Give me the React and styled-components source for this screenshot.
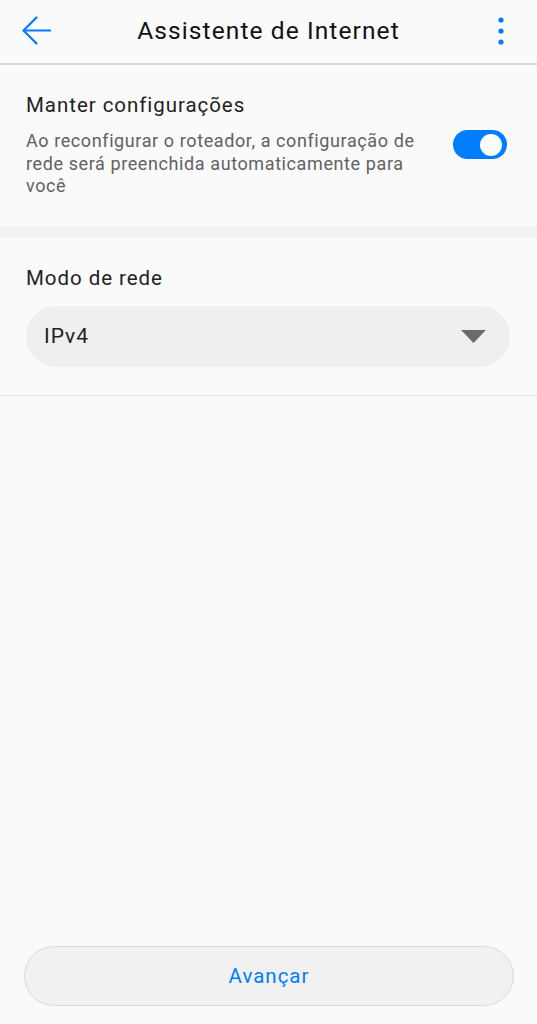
import React from "react";
import styled, { createGlobalStyle } from "styled-components";

const Global = createGlobalStyle`
  html, body { margin: 0; padding: 0; background: #fafafa; }
  body { font-family: Roboto, "Noto Sans", Arial, sans-serif; }
  * { box-sizing: border-box; }
`;

const Page = styled.div`
  min-height: 100vh;
  display: flex;
  flex-direction: column;
  background: #fafafa;
`;

const Header = styled.header`
  height: 65px;
  display: flex;
  align-items: center;
  justify-content: space-between;
  padding: 0 20px 2px 20px;
  border-bottom: 2px solid #d8d8d8;
`;

const IconButton = styled.button`
  width: 32px;
  height: 32px;
  padding: 0;
  border: none;
  background: none;
  display: flex;
  align-items: center;
  justify-content: center;
`;

const Title = styled.h1`
  margin: 0;
  font-size: 24.5px;
  font-weight: 400;
  color: #111;
  letter-spacing: 1.1px;
`;

const Section = styled.section`
  padding: ${(p) => p.$pad};
  background: #fafafa;
  border-bottom: ${(p) => (p.$line ? "1px solid #e3e3e3" : "none")};
`;

const Band = styled.div`
  height: 11px;
  background: #f3f3f3;
`;

const SectionTitle = styled.div`
  font-size: 20.5px;
  line-height: 24px;
  letter-spacing: 0.95px;
  color: #222;
`;

const Row = styled.div`
  display: flex;
  align-items: flex-start;
  justify-content: space-between;
  margin-top: 13px;
`;

const Desc = styled.p`
  margin: 0;
  width: 400px;
  font-size: 18px;
  line-height: 22.5px;
  letter-spacing: 0.6px;
  color: #616161;
`;

const Toggle = styled.div`
  width: 54px;
  height: 29px;
  border-radius: 15px;
  background: #007dff;
  display: flex;
  align-items: center;
  justify-content: flex-end;
  padding-right: 5px;
  flex-shrink: 0;
`;

const Knob = styled.div`
  width: 22px;
  height: 22px;
  border-radius: 50%;
  background: #fff;
`;

const Select = styled.div`
  margin-top: 16px;
  height: 61px;
  border-radius: 31px;
  background: #efefef;
  display: flex;
  align-items: center;
  justify-content: space-between;
  padding: 0 24px 0 18px;
  font-size: 21px;
  letter-spacing: 1px;
  color: #222;
`;

const Spacer = styled.div`
  flex: 1;
`;

const Footer = styled.div`
  padding: 0 23px 18px 24px;
`;

const PrimaryButton = styled.button`
  width: 100%;
  height: 60px;
  border-radius: 30px;
  border: 1px solid #dadada;
  background: #f1f1f1;
  color: #007dff;
  font-family: Roboto, "Noto Sans", Arial, sans-serif;
  font-size: 20.5px;
  letter-spacing: 1px;
`;

export default function App() {
  return (
    <Page>
      <Global />
      <Header>
        <IconButton aria-label="Voltar">
          <svg width="30" height="30" viewBox="0 0 30 30" fill="none">
            <path d="M29 14.5H3" stroke="#007dff" strokeWidth="2.2" strokeLinecap="round" />
            <path d="M15.5 1.5L2.5 14.5L15.5 27.5" stroke="#007dff" strokeWidth="2.2" strokeLinecap="round" strokeLinejoin="round" />
          </svg>
        </IconButton>
        <Title>Assistente de Internet</Title>
        <IconButton aria-label="Mais">
          <svg width="8" height="30" viewBox="0 0 8 30">
            <circle cx="4" cy="4" r="2.6" fill="#007dff" />
            <circle cx="4" cy="15" r="2.6" fill="#007dff" />
            <circle cx="4" cy="26" r="2.6" fill="#007dff" />
          </svg>
        </IconButton>
      </Header>

      <Section $pad="28px 30px 28px 26px">
        <SectionTitle>Manter configurações</SectionTitle>
        <Row>
          <Desc>
            Ao reconfigurar o roteador, a configuração de rede será preenchida
            automaticamente para você
          </Desc>
          <Toggle>
            <Knob />
          </Toggle>
        </Row>
      </Section>

      <Band />

      <Section $pad="29px 27px 28px 26px" $line>
        <SectionTitle>Modo de rede</SectionTitle>
        <Select>
          <span>IPv4</span>
          <svg width="25" height="13" viewBox="0 0 25 13">
            <path d="M0 0H25L12.5 13Z" fill="#6b6b6b" />
          </svg>
        </Select>
      </Section>

      <Spacer />

      <Footer>
        <PrimaryButton>Avançar</PrimaryButton>
      </Footer>
    </Page>
  );
}
